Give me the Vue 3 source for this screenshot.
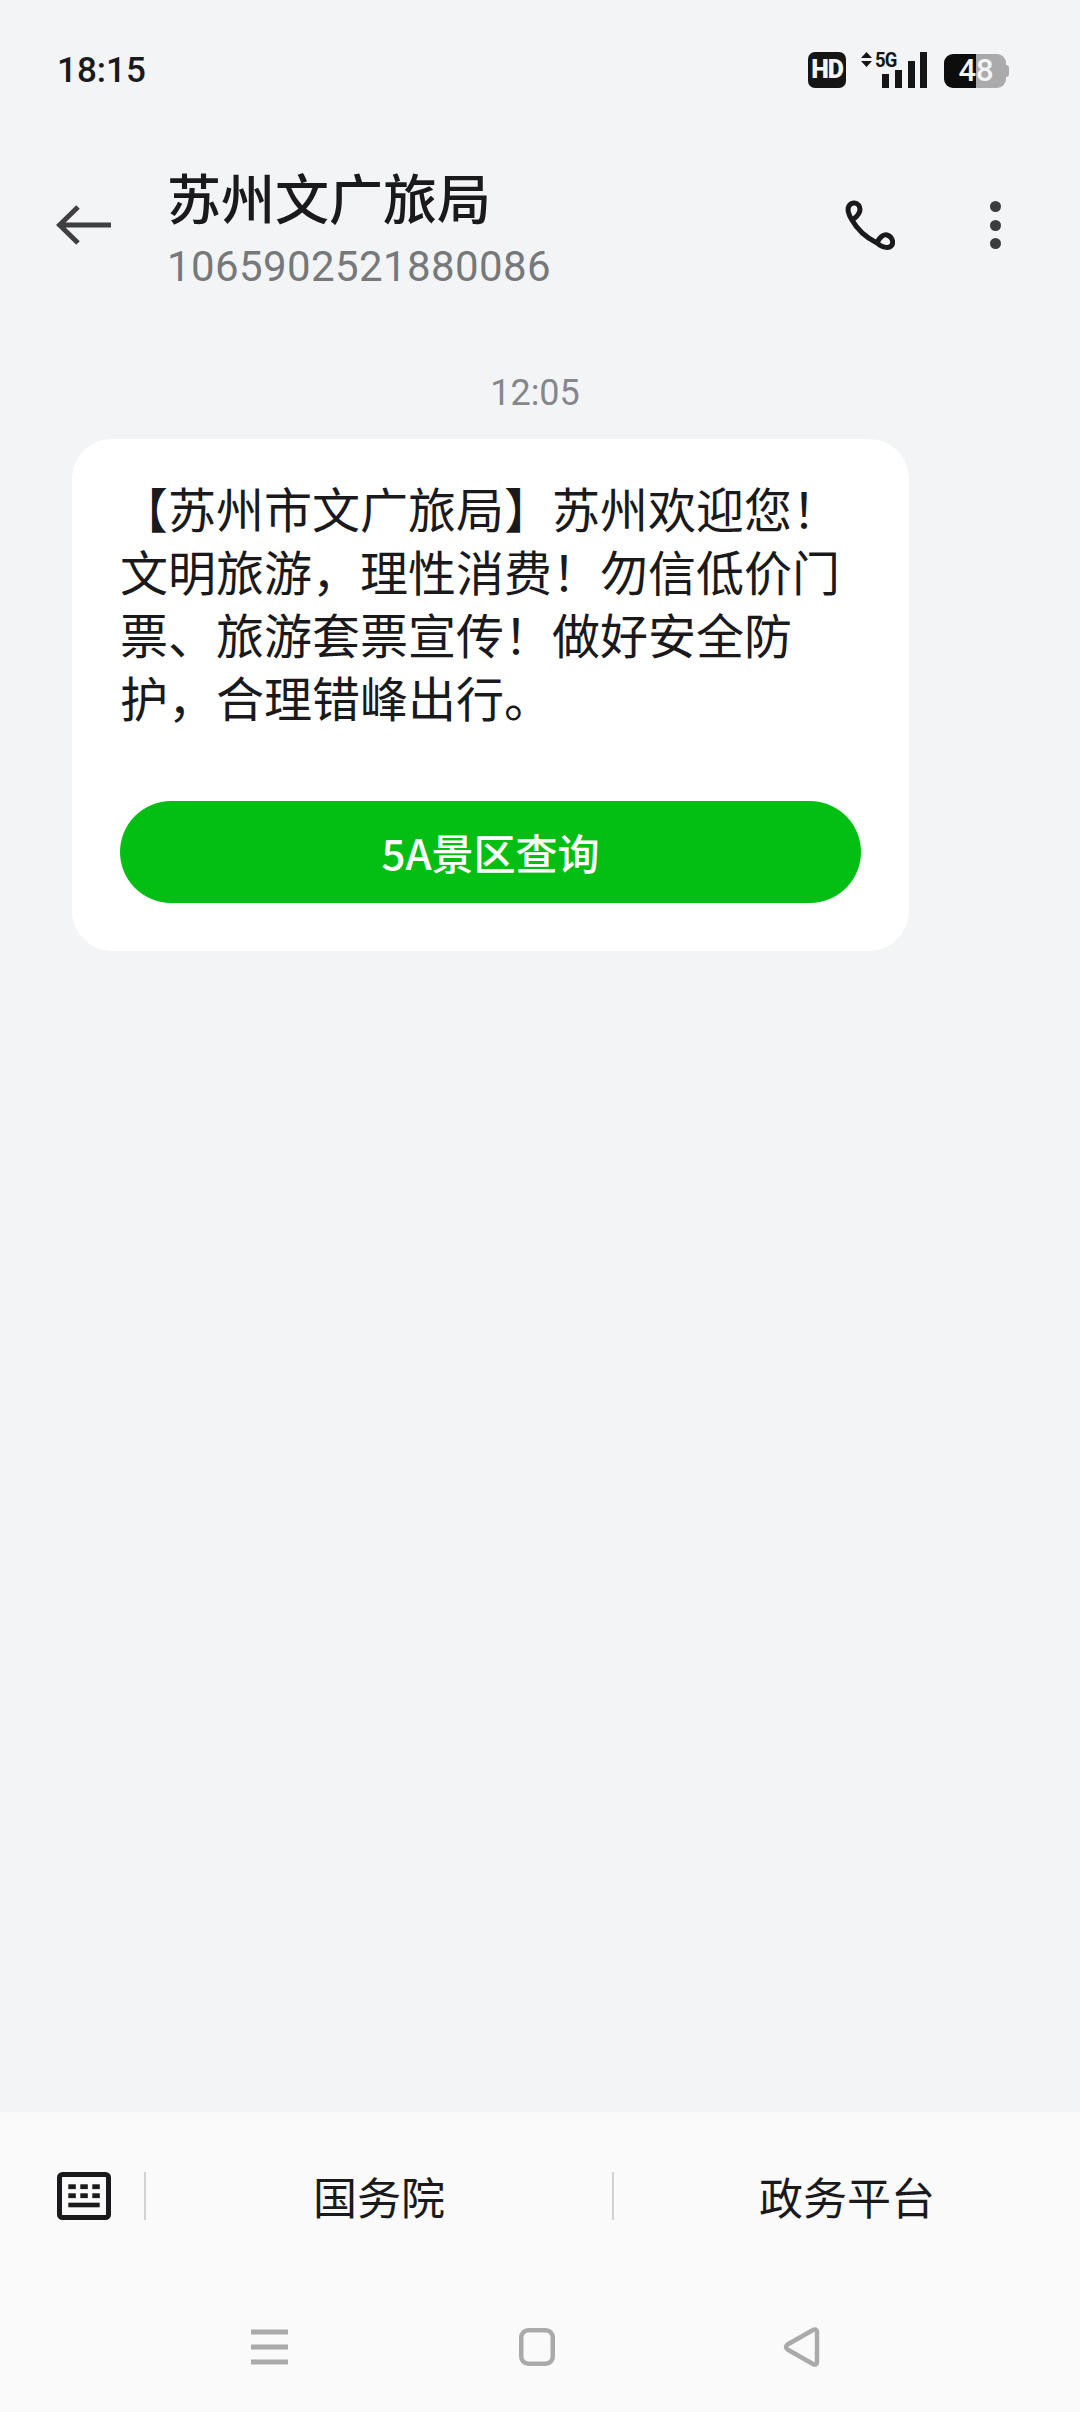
<template>
  <div class="page">
    <div class="status">
      <span class="clock">18:15</span>
      <div class="status-right">
        <span class="hd">HD</span>
        <div class="signal">
          <svg class="updown" width="11" height="15" viewBox="0 0 11 15">
            <path d="M5.5 0 11 6H0zM0 9h11l-5.5 6z" fill="#151515" />
          </svg>
          <span class="fiveg">5G</span>
          <svg class="bars" width="46" height="36" viewBox="0 0 46 36">
            <rect x="1" y="22" width="7" height="14" />
            <rect x="14" y="18" width="7" height="18" />
            <rect x="27" y="9" width="7" height="27" />
            <rect x="39" y="0" width="7" height="36" />
          </svg>
        </div>
        <div class="battery">
          <span class="batt-fill"></span>
          <span class="batt-rest"></span>
          <span class="batt-cap"></span>
          <span class="batt-text">48</span>
        </div>
      </div>
    </div>

    <div class="header">
      <svg class="back" width="56" height="42" viewBox="0 0 56 42">
        <path d="M22 3 3.5 21 22 39M4 21h51" fill="none" stroke="#3f3f41" stroke-width="5" />
      </svg>
      <div class="contact">
        <div class="name">苏州文广旅局</div>
        <div class="number">1065902521880086</div>
      </div>
      <svg class="phone" width="50" height="50" viewBox="0 0 50 50">
        <path d="M7 20C3.500 15 2 9 4 6c2-3.500 7-4 9.500-1 3 4 1.500 10-6.500 15 5 9 15 18 25 23 2-5 6-9 10-8 4 1 7 6 5 10-2 3.500-9 3.500-15-2" fill="none" stroke="#1a1a1c" stroke-width="5" stroke-linejoin="round" stroke-linecap="round" />
      </svg>
      <div class="more">
        <i></i><i></i><i></i>
      </div>
    </div>

    <div class="time">12:05</div>

    <div class="bubble">
      <p class="text">【苏州市文广旅局】苏州欢迎您！文明旅游，理性消费！勿信低价门票、旅游套票宣传！做好安全防护，合理错峰出行。</p>
      <div class="action">5A景区查询</div>
    </div>

    <div class="spacer"></div>

    <div class="bottom">
      <div class="menu-row">
        <svg class="keyboard" width="54" height="48" viewBox="0 0 54 48">
          <rect x="2.5" y="2.5" width="49" height="43" rx="3" fill="none" stroke="#1a1a1c" stroke-width="5" />
          <g fill="#1a1a1c">
            <rect v-for="k in keys" :key="k.x + '-' + k.y" :x="k.x" :y="k.y" width="7.5" height="4.8" />
            <rect x="11.3" y="30.7" width="31.4" height="4.6" />
          </g>
        </svg>
        <div class="menu-item">国务院</div>
        <div class="menu-item">政务平台</div>
      </div>
      <div class="nav">
        <svg width="37" height="36" viewBox="0 0 37 36">
          <path d="M0 3h37M0 18h37M0 33h37" stroke="#aaa" stroke-width="5" fill="none" />
        </svg>
        <svg width="36" height="38" viewBox="0 0 36 38">
          <rect x="2.25" y="2.25" width="31.5" height="33.5" rx="7" fill="none" stroke="#aaa" stroke-width="4.5" />
        </svg>
        <svg width="37" height="40" viewBox="0 0 37 40">
          <path d="M34 5c0-2.500-2-3.200-4-2L4.500 17.500c-2 1.500-2 3.500 0 5L30 37c2 1.200 4 .5 4-2z" fill="none" stroke="#aaa" stroke-width="4.5" stroke-linejoin="round" />
        </svg>
      </div>
    </div>
  </div>
</template>

<script setup>
const keys = []
for (const y of [12.3, 21.3]) {
  for (const x of [11.3, 23.3, 35.3]) {
    keys.push({ x, y })
  }
}
</script>

<style>
html,
body {
  margin: 0;
  background: #f3f4f6;
}
</style>

<style scoped>
.page {
  display: flex;
  flex-direction: column;
  width: 1080px;
  height: 2412px;
  overflow: hidden;
  background: #f3f4f6;
  font-family: "Noto Sans CJK SC", "Noto Sans", sans-serif;
  color: #1a1a1c;
}

.status {
  display: flex;
  justify-content: space-between;
  align-items: center;
  height: 36px;
  padding: 52px 70px 0 57px;
}

.clock {
  font-family: Roboto, sans-serif;
  font-weight: 500;
  font-size: 35px;
  line-height: 38px;
  padding-top: 2px;
  color: #1a1a1c;
}

.status-right {
  display: flex;
  align-items: flex-start;
}

.hd {
  width: 38px;
  height: 36px;
  border-radius: 7px;
  background: #151515;
  color: #f3f4f6;
  font-family: Roboto, sans-serif;
  font-weight: 900;
  font-size: 25px;
  line-height: 36px;
  text-align: center;
  letter-spacing: -1px;
}

.signal {
  position: relative;
  width: 70px;
  height: 36px;
  margin-left: 15px;
}

.updown {
  position: absolute;
  left: 0;
  top: 0;
}

.fiveg {
  position: absolute;
  left: 14px;
  top: -2px;
  font-family: Roboto, sans-serif;
  font-weight: 700;
  font-size: 21px;
  line-height: 20px;
  letter-spacing: -1px;
  transform: scaleX(0.88);
  transform-origin: left center;
  color: #151515;
}

.bars {
  position: absolute;
  left: 20px;
  top: 0;
  fill: #151515;
}

.battery {
  position: relative;
  display: flex;
  width: 66px;
  height: 34px;
  margin: 2px 0 0 13px;
}

.batt-fill {
  width: 32px;
  background: #0d0d0d;
  border-radius: 9px 0 0 9px;
}

.batt-rest {
  width: 30px;
  background: #aaaaac;
  border-radius: 0 9px 9px 0;
}

.batt-cap {
  width: 3px;
  height: 12px;
  margin-top: 11px;
  background: #aaaaac;
  border-radius: 0 3px 3px 0;
}

.batt-text {
  position: absolute;
  left: 0;
  width: 64px;
  top: 0;
  text-align: center;
  font-family: Roboto, sans-serif;
  font-weight: 500;
  font-size: 31px;
  line-height: 34px;
  color: #f3f4f6;
}

.header {
  display: flex;
  align-items: center;
  height: 131px;
  margin-top: 73px;
  padding: 0 79px 0 56px;
}

.back,
.phone,
.more {
  flex: none;
  margin-bottom: 3px;
}

.contact {
  flex: 1;
  margin-left: 55px;
}

.name {
  font-size: 54px;
  line-height: 70px;
  font-weight: 500;
  color: #1a1a1c;
}

.number {
  margin-top: 10px;
  font-family: Roboto, sans-serif;
  font-size: 42px;
  letter-spacing: 0.4px;
  line-height: 50px;
  color: #77787a;
}

.more {
  display: flex;
  flex-direction: column;
  gap: 7.5px;
  margin-left: 95px;
}

.more i {
  width: 11px;
  height: 11px;
  border-radius: 50%;
  background: #3c3c3e;
}

.time {
  margin-top: 80px;
  padding-right: 10px;
  text-align: center;
  font-family: Roboto, sans-serif;
  font-size: 36px;
  line-height: 42px;
  color: #85878a;
}

.bubble {
  box-sizing: border-box;
  width: 837px;
  height: 512px;
  margin: 25px 0 0 72px;
  padding: 37px 47px 0 48px;
  border-radius: 40px;
  background: #fff;
}

.text {
  width: 728px;
  margin: 0;
  font-size: 48px;
  line-height: 63px;
  color: #1a1a1c;
}

.action {
  width: 741px;
  height: 102px;
  margin-top: 73px;
  border-radius: 51px;
  background: #03bf13;
  color: #fff;
  text-align: center;
  font-size: 42px;
  font-weight: 500;
  line-height: 102px;
}

.spacer {
  flex: 1;
}

.bottom {
  height: 300px;
  background: #fafafa;
}

.menu-row {
  display: flex;
  align-items: center;
  height: 48px;
  padding: 60px 0 0 57px;
}

.keyboard {
  flex: none;
  margin-right: 33px;
}

.menu-item {
  width: 467px;
  height: 48px;
  border-left: 2px solid #d2d2d2;
  text-align: center;
  font-size: 44px;
  line-height: 48px;
  color: #1a1a1c;
}

.nav {
  display: flex;
  align-items: center;
  height: 40px;
  margin-top: 107px;
  padding-left: 251px;
}

.nav svg:nth-child(2) {
  margin-left: 231px;
}

.nav svg:nth-child(3) {
  margin-left: 228px;
}
</style>
